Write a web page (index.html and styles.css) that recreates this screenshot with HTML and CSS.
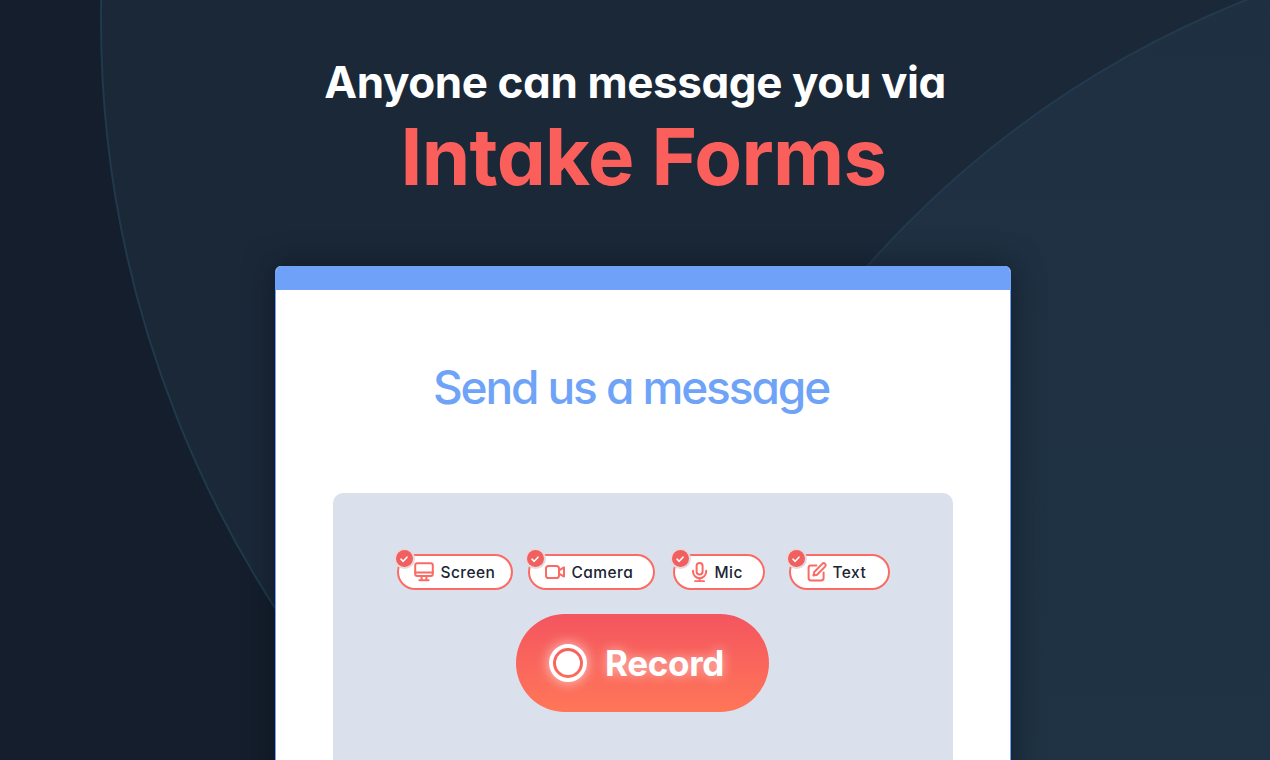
FILE: index.html
```html
<!DOCTYPE html>
<html lang="en">
<head>
<meta charset="utf-8">
<title>Intake Forms</title>
<link rel="stylesheet" href="styles.css">
</head>
<body>
<main class="page">
  <div class="circle circle-outer"></div>
  <div class="circle circle-inner"></div>
  <header class="hero">
    <h1 class="hero-line">Anyone can message you via</h1>
    <h2 class="hero-title">Intake Forms</h2>
  </header>
  <section class="card">
    <div class="card-bar"></div>
    <div class="card-body">
      <h3 class="card-title">Send us a message</h3>
      <div class="panel">
        <div class="options">
          <div class="pill pill-screen">
            <span class="badge"><svg viewBox="0 0 12 12"><path d="M3 6.2 5.2 8.3 9 4.2"/></svg></span>
            <svg class="icon" viewBox="0 0 20 20"><rect x="1.2" y="1.2" width="17.6" height="12.8" rx="2"/><path d="M1.2 10.6H18.8M7.6 14v4M12.4 14v4M5.4 18.2h9.2"/></svg>
            <span class="label">Screen</span>
          </div>
          <div class="pill pill-camera">
            <span class="badge"><svg viewBox="0 0 12 12"><path d="M3 6.2 5.2 8.3 9 4.2"/></svg></span>
            <svg class="icon" viewBox="0 0 20 20"><rect x="1" y="4" width="13" height="12" rx="2.6"/><path d="M14 8.4 19 5.4V14.6L14 11.6"/></svg>
            <span class="label">Camera</span>
          </div>
          <div class="pill pill-mic">
            <span class="badge"><svg viewBox="0 0 12 12"><path d="M3 6.2 5.2 8.3 9 4.2"/></svg></span>
            <svg class="icon" viewBox="0 0 20 20"><rect x="6.6" y="1" width="6" height="11.4" rx="3"/><path d="M3 8.8V9.6a6.6 6.6 0 0 0 13.2 0V8.8M9.6 16.2v3M5.2 19.2h8.8"/></svg>
            <span class="label">Mic</span>
          </div>
          <div class="pill pill-text">
            <span class="badge"><svg viewBox="0 0 12 12"><path d="M3 6.2 5.2 8.3 9 4.2"/></svg></span>
            <svg class="icon" viewBox="0 0 20 20"><path d="M9.4 3.4H4a2.4 2.4 0 0 0-2.4 2.4V16A2.4 2.4 0 0 0 4 18.4h10.2a2.4 2.4 0 0 0 2.4-2.4V10.6"/><path d="M15.2 1.9a1.9 1.9 0 0 1 2.9 2.7L10 12.7l-3.6.9.9-3.6z"/></svg>
            <span class="label">Text</span>
          </div>
        </div>
        <button class="record" type="button">
          <span class="record-icon"><span class="record-dot"></span></span>
          <span class="record-label">Record</span>
        </button>
      </div>
    </div>
  </section>
</main>
</body>
</html>
```
FILE: styles.css
```css
* { box-sizing: border-box; }
html, body { margin: 0; padding: 0; height: 100%; overflow: hidden; }
body {
  font-family: Inter, "Liberation Sans", sans-serif;
  font-feature-settings: "cv11" 1;
  background: #141e2c;
}
.page {
  position: relative;
  width: 1270px;
  height: 760px;
  overflow: hidden;
  background: #141e2c;
}
.circle {
  position: absolute;
  border-radius: 50%;
  pointer-events: none;
}
.circle-outer {
  left: 100px;
  top: -1060px;
  width: 2160px;
  height: 2160px;
  background: #1a2838;
  border: 2px solid #20394b;
}
.circle-inner {
  left: 615px;
  top: -72px;
  width: 2002px;
  height: 2002px;
  background: linear-gradient(180deg, #1e2f41 0%, #1f3344 45%);
  border: 2px solid #233a4e;
}
.hero {
  position: relative;
  height: 266px;
  padding-top: 54px;
  text-align: center;
}
.hero-line {
  margin: 0;
  font-size: 44px;
  line-height: 56px;
  font-weight: 700;
  letter-spacing: -0.4px;
  color: #ffffff;
}
.hero-title {
  margin: 3px 0 0 17px;
  font-size: 78px;
  line-height: 88px;
  font-weight: 700;
  letter-spacing: -0.7px;
  color: #fb5f5b;
}
.card {
  position: relative;
  width: 736px;
  height: 600px;
  margin-left: 275px;
  border-radius: 6px 6px 0 0;
  background: #ffffff;
  box-shadow: 0 0 30px rgba(10, 14, 22, 0.55);
  overflow: hidden;
  border: 1px solid #6ea1f7;
  border-top: 0;
}
.card-bar { height: 24px; background: #6ea1f7; }
.card-body { padding: 69px 57px 0; }
.card-title {
  margin: 0 24px 0 0;
  text-align: center;
  font-size: 46px;
  line-height: 56px;
  font-weight: 500;
  letter-spacing: -2.1px;
  color: #6ea3f8;
}
.panel {
  margin-top: 78px;
  height: 400px;
  padding-top: 61px;
  border-radius: 10px;
  background: #dae1ec;
  display: flex;
  flex-direction: column;
  align-items: center;
}
.options { display: flex; height: 36px; }
.pill {
  position: relative;
  display: flex;
  align-items: center;
  height: 36px;
  padding-left: 15px;
  border: 2px solid #fb6b64;
  border-radius: 18px;
  background: #ffffff;
}
.pill-screen { width: 116px; gap: 7px; }
.pill-camera { width: 127px; gap: 7px; margin-left: 15px; }
.pill-mic { width: 92px; gap: 5px; margin-left: 18px; }
.pill-text { width: 101px; gap: 6px; padding-left: 16px; margin-left: 24px; }
.badge {
  position: absolute;
  left: -3px;
  top: -6px;
  width: 17px;
  height: 17px;
  border-radius: 50%;
  background: #f1605f;
  box-shadow: 0 0 0 2px #e6d9de;
  display: flex;
  align-items: center;
  justify-content: center;
}
.badge svg {
  width: 12px;
  height: 12px;
  fill: none;
  stroke: #ffffff;
  stroke-width: 1.6;
  stroke-linecap: round;
  stroke-linejoin: round;
}
.icon {
  flex: none;
  width: 20px;
  height: 20px;
  fill: none;
  stroke: #fb6b64;
  stroke-width: 2;
  stroke-linecap: round;
  stroke-linejoin: round;
}
.label {
  padding-top: 1px;
  font-size: 15.5px;
  line-height: 20px;
  font-weight: 500;
  color: #1a2433;
  letter-spacing: 0.45px;
}
.record {
  margin: 24px 1px 0 0;
  width: 253px;
  height: 98px;
  border: 0;
  border-radius: 49px;
  padding: 0 0 0 33px;
  display: flex;
  align-items: center;
  gap: 18px;
  font-family: inherit;
  font-feature-settings: inherit;
  background: linear-gradient(180deg, #f4555f 0%, #ff7658 100%);
}
.record-icon {
  width: 38px;
  height: 38px;
  border: 4px solid #ffffff;
  border-radius: 50%;
  display: flex;
  align-items: center;
  justify-content: center;
  box-shadow: 0 0 14px rgba(255, 255, 255, 0.7);
}
.record-dot {
  width: 24px;
  height: 24px;
  border-radius: 50%;
  background: #ffffff;
}
.record-label {
  font-size: 35px;
  line-height: 44px;
  font-weight: 700;
  color: #ffffff;
  letter-spacing: -0.3px;
  text-shadow: 0 0 12px rgba(255, 255, 255, 0.6);
}
```
